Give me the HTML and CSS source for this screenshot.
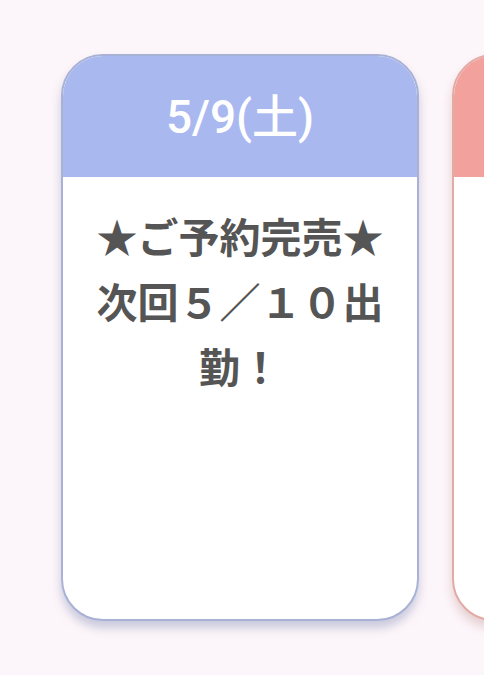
FILE: index.html
```html
<!DOCTYPE html>
<html lang="ja">
<head>
<meta charset="utf-8">
<link rel="stylesheet" href="styles.css">
</head>
<body>
<div class="row">
  <div class="card card-blue">
    <div class="card-head">5/9(土)</div>
    <div class="card-body">★ご予約完売★次回５／１０出勤！</div>
  </div>
  <div class="card card-red">
    <div class="card-head"></div>
    <div class="card-body"></div>
  </div>
</div>
</body>
</html>
```
FILE: styles.css
```css
html, body {
  margin: 0;
  padding: 0;
  width: 484px;
  height: 675px;
  overflow: hidden;
  background: #fcf5f9;
}
.row {
  display: flex;
  gap: 33px;
  padding: 54px 0 0 61px;
}
.card {
  flex: 0 0 358px;
  width: 358px;
  height: 567px;
  box-sizing: border-box;
  border-radius: 42px;
  background: #fff;
  overflow: hidden;
  display: flex;
  flex-direction: column;
  border: 2px solid #a8b1d6;
  box-shadow: 0 7px 10px rgba(110, 120, 170, 0.35);
}
.card-red {
  border-color: #e3aaa6;
  box-shadow: 0 7px 10px rgba(180, 120, 120, 0.3);
}
.card-head {
  height: 123px;
  flex: 0 0 123px;
  margin: -2px -2px 0;
  display: flex;
  align-items: center;
  justify-content: center;
  color: #fff;
  font-family: Roboto, "Noto Sans CJK JP", sans-serif;
  font-weight: 500;
  font-size: 46px;
  padding-bottom: 6px;
  box-sizing: border-box;
}
.card-blue .card-head { background: #aab8f0; }
.card-red .card-head { background: #f2a19c; }
.card-body {
  padding: 26px 24px 0;
  text-align: center;
  font-family: "Noto Sans CJK JP", sans-serif;
  font-weight: 700;
  font-size: 41px;
  line-height: 65px;
  color: #555;
}
```
